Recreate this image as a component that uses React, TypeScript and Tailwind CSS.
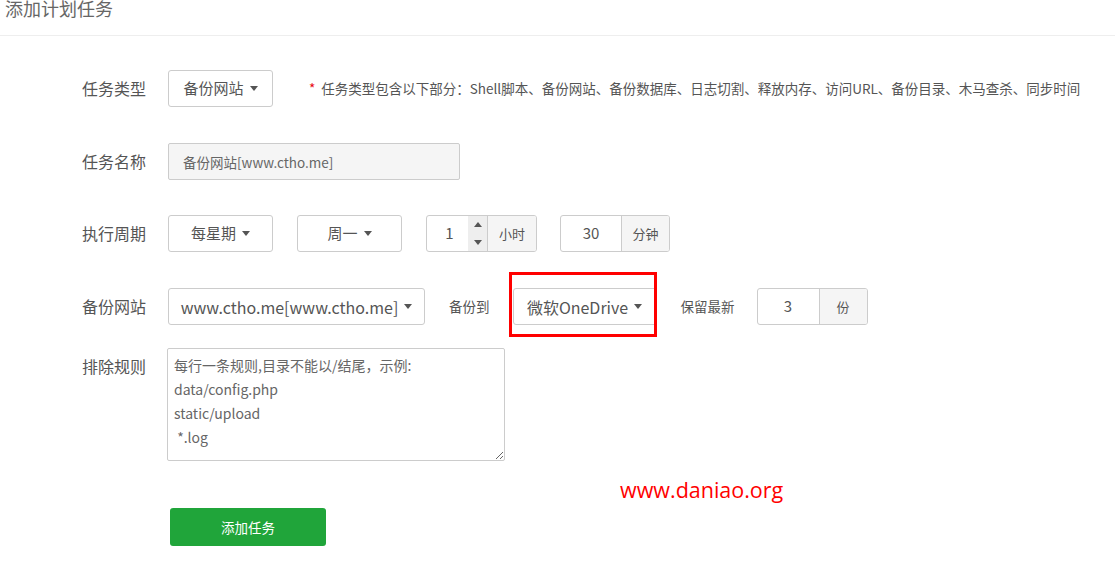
import React from 'react';

const FONT = '"Noto Sans CJK SC", "Noto Sans", sans-serif';

const Caret = () => (
  <span className="ml-[6px] inline-block w-0 h-0 border-t-[5px] border-t-[#555] border-x-[4px] border-x-transparent" />
);

const Dropdown: React.FC<{ label: string; className?: string; textClass?: string }> = ({
  label,
  className = '',
  textClass = 'text-[15px]'
}) => (
  <button
    type="button"
    className={`h-[37px] flex items-center justify-center border border-[#ccc] rounded-[3px] bg-white text-[#555] ${textClass} ${className}`}
  >
    <span>{label}</span>
    <Caret />
  </button>
);

const Label: React.FC<{ children: React.ReactNode }> = ({ children }) => (
  <label className="w-[64px] mr-[22px] shrink-0 text-[16px] leading-[37px] text-[#555]">{children}</label>
);

export default function App() {
  return (
    <div className="relative w-[1115px] h-[574px] bg-white overflow-hidden" style={{ fontFamily: FONT }}>
      {/* 标题 */}
      <div className="flex h-[36px] border-b border-[#eee] pl-[5px]">
        <h2 className="relative -top-[1px] text-[18px] leading-[18px] text-[#666]">添加计划任务</h2>
      </div>

      <div className="pt-[34px] pl-[82px]">
        {/* 任务类型 */}
        <div className="flex items-center h-[37px]">
          <Label>任务类型</Label>
          <Dropdown label="备份网站" className="w-[105px]" />
          <span className="ml-[36px] text-[13.5px] text-[#555]">
            <span className="text-red-600 mr-[6px]">*</span>
            任务类型包含以下部分：Shell脚本、备份网站、备份数据库、日志切割、释放内存、访问URL、备份目录、木马查杀、同步时间
          </span>
        </div>

        {/* 任务名称 */}
        <div className="flex items-center h-[37px] mt-[36px]">
          <Label>任务名称</Label>
          <input
            readOnly
            value="备份网站[www.ctho.me]"
            className="w-[292px] h-[37px] px-[14px] border border-[#ccc] rounded-[2px] bg-[#f5f5f5] text-[13.5px] text-[#666] outline-none"
          />
        </div>

        {/* 执行周期 */}
        <div className="flex items-center h-[37px] mt-[35px]">
          <Label>执行周期</Label>
          <Dropdown label="每星期" className="w-[105px]" />
          <Dropdown label="周一" className="w-[105px] ml-[24px]" />
          <div className="ml-[24px] flex h-[37px] border border-[#ccc] rounded-[3px] overflow-hidden">
            <div className="w-[41px] pl-[4px] flex items-center justify-center text-[15px] text-[#555]">1</div>
            <div className="w-[19px] bg-[#eee] flex flex-col items-center justify-between py-[6px]">
              <span className="w-0 h-0 border-b-[5px] border-b-[#555] border-x-[4px] border-x-transparent" />
              <span className="w-0 h-0 border-t-[5px] border-t-[#555] border-x-[4px] border-x-transparent" />
            </div>
            <div className="w-[49px] border-l border-[#ccc] bg-[#f5f5f5] flex items-center justify-center text-[13px] text-[#555]">
              小时
            </div>
          </div>
          <div className="ml-[23px] flex h-[37px] border border-[#ccc] rounded-[3px] overflow-hidden">
            <div className="w-[60px] flex items-center justify-center text-[15px] text-[#555]">30</div>
            <div className="w-[48px] border-l border-[#ccc] bg-[#f5f5f5] flex items-center justify-center text-[13px] text-[#555]">
              分钟
            </div>
          </div>
        </div>

        {/* 备份网站 */}
        <div className="flex items-center h-[37px] mt-[36px]">
          <Label>备份网站</Label>
          <Dropdown label="www.ctho.me[www.ctho.me]" className="w-[257px]" textClass="text-[16px]" />
          <span className="ml-[24px] text-[13.5px] text-[#555]">备份到</span>
          <div className="relative ml-[23px]">
            <Dropdown label="微软OneDrive" className="w-[144px]" textClass="text-[16px]" />
            <div className="absolute -left-[4px] -top-[16px] w-[148px] h-[65px] border-[3px] border-[#ff0000]" />
          </div>
          <span className="ml-[24px] text-[13.5px] text-[#555]">保留最新</span>
          <div className="ml-[22px] flex h-[37px] border border-[#ccc] rounded-[3px] overflow-hidden">
            <div className="w-[61px] flex items-center justify-center text-[15px] text-[#555]">3</div>
            <div className="w-[48px] border-l border-[#ccc] bg-[#f5f5f5] flex items-center justify-center text-[13px] text-[#555]">
              份
            </div>
          </div>
        </div>

        {/* 排除规则 */}
        <div className="flex items-start mt-[23px]">
          <Label>排除规则</Label>
          <textarea
            className="-ml-[1px] w-[338px] h-[113px] px-[6px] pt-[4px] border border-[#ccc] rounded-[2px] text-[14px] leading-[24px] text-[#666] placeholder:text-[#666] outline-none"
            placeholder={'每行一条规则,目录不能以/结尾，示例:\ndata/config.php\nstatic/upload\n *.log'}
          />
        </div>

        {/* 提交 */}
        <div className="mt-[47px] ml-[88px]">
          <button
            type="button"
            className="w-[156px] h-[38px] rounded-[3px] bg-[#20a53a] text-white text-[13.5px]"
          >
            添加任务
          </button>
        </div>
      </div>

      <span
        className="absolute left-[620px] top-[476px] text-[21.5px] leading-[28px] text-[#ff0000]"
        style={{ fontFamily: '"Open Sans", sans-serif' }}
      >
        www.daniao.org
      </span>
    </div>
  );
}
